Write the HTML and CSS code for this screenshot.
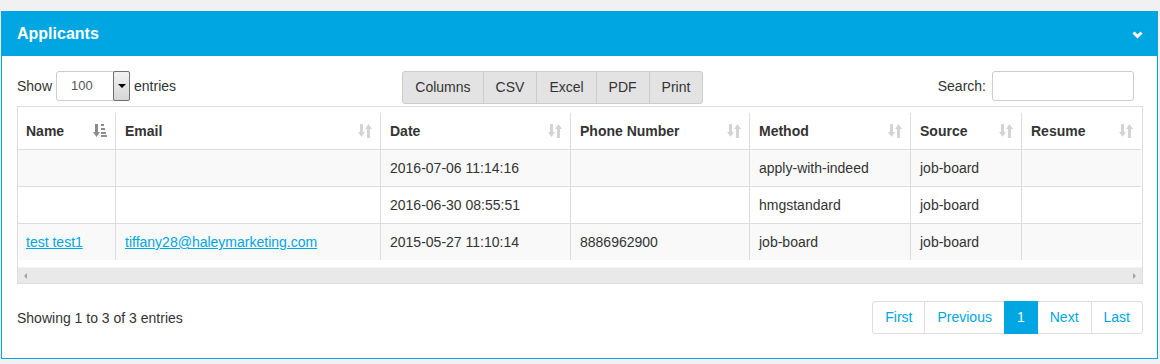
FILE: index.html
```html
<!DOCTYPE html>
<html lang="en">
  <head>
    <meta charset="UTF-8" />
    <title>Applicants</title>
    <link rel="stylesheet" href="styles.css">
  </head>
  <body>
    <div class="panel">
      <div class="panel-heading">
        <span class="panel-title">Applicants</span>
        <svg class="chevron" width="11" height="8" viewBox="0 0 11 8">
          <polyline points="1.5,1.5 5.5,5.5 9.5,1.5" fill="none" stroke="#fff" stroke-width="3" />
        </svg>
      </div>
      <div class="panel-body">
        <div class="controls">
          <div class="length">
            <span>Show</span>
            <div class="select">
              <span class="select-value">100</span>
              <span class="select-arrow"><i></i></span>
            </div>
            <span>entries</span>
          </div>
          <div class="btn-group">
            <a class="btn" href="javascript:;">Columns</a>
            <a class="btn" href="javascript:;">CSV</a>
            <a class="btn" href="javascript:;">Excel</a>
            <a class="btn" href="javascript:;">PDF</a>
            <a class="btn" href="javascript:;">Print</a>
          </div>
          <div class="filter">
            <label>Search:</label>
            <input type="text" />
          </div>
        </div>

        <div class="scroll">
          <table>
            <colgroup>
              <col style="width: 97px" />
              <col style="width: 265px" />
              <col style="width: 190px" />
              <col style="width: 179px" />
              <col style="width: 161px" />
              <col style="width: 111px" />
              <col style="width: 120px" />
            </colgroup>
            <thead>
              <tr>
                <th>Name
                  <svg class="sort active" width="14" height="14" viewBox="0 0 14 14">
                    <rect x="2" y="0" width="3" height="9" />
                    <polygon points="0,8 7,8 3.5,13" />
                    <rect x="8" y="0" width="3" height="2" />
                    <rect x="8" y="4" width="4" height="2" />
                    <rect x="8" y="8" width="5" height="2" />
                    <rect x="8" y="11" width="6" height="2" />
                  </svg>
                </th>
                <th>Email<svg class="sort" width="14" height="14" viewBox="0 0 14 14"><rect x="2" y="0" width="3" height="9" /><polygon points="0,8 7,8 3.5,13" /><rect x="9" y="4" width="3" height="10" /><polygon points="7,5 14,5 10.5,0" /></svg></th>
                <th>Date<svg class="sort" width="14" height="14" viewBox="0 0 14 14"><rect x="2" y="0" width="3" height="9" /><polygon points="0,8 7,8 3.5,13" /><rect x="9" y="4" width="3" height="10" /><polygon points="7,5 14,5 10.5,0" /></svg></th>
                <th>Phone Number<svg class="sort" width="14" height="14" viewBox="0 0 14 14"><rect x="2" y="0" width="3" height="9" /><polygon points="0,8 7,8 3.5,13" /><rect x="9" y="4" width="3" height="10" /><polygon points="7,5 14,5 10.5,0" /></svg></th>
                <th>Method<svg class="sort" width="14" height="14" viewBox="0 0 14 14"><rect x="2" y="0" width="3" height="9" /><polygon points="0,8 7,8 3.5,13" /><rect x="9" y="4" width="3" height="10" /><polygon points="7,5 14,5 10.5,0" /></svg></th>
                <th>Source<svg class="sort" width="14" height="14" viewBox="0 0 14 14"><rect x="2" y="0" width="3" height="9" /><polygon points="0,8 7,8 3.5,13" /><rect x="9" y="4" width="3" height="10" /><polygon points="7,5 14,5 10.5,0" /></svg></th>
                <th>Resume<svg class="sort" width="14" height="14" viewBox="0 0 14 14"><rect x="2" y="0" width="3" height="9" /><polygon points="0,8 7,8 3.5,13" /><rect x="9" y="4" width="3" height="10" /><polygon points="7,5 14,5 10.5,0" /></svg></th>
              </tr>
            </thead>
            <tbody>
              <tr class="odd">
                <td></td>
                <td></td>
                <td>2016-07-06 11:14:16</td>
                <td></td>
                <td>apply-with-indeed</td>
                <td>job-board</td>
                <td></td>
              </tr>
              <tr>
                <td></td>
                <td></td>
                <td>2016-06-30 08:55:51</td>
                <td></td>
                <td>hmgstandard</td>
                <td>job-board</td>
                <td></td>
              </tr>
              <tr class="odd">
                <td><a href="javascript:;">test test1</a></td>
                <td><a href="javascript:;">tiffany28@haleymarketing.com</a></td>
                <td>2015-05-27 11:10:14</td>
                <td>8886962900</td>
                <td>job-board</td>
                <td>job-board</td>
                <td></td>
              </tr>
            </tbody>
          </table>
          <div class="scrollbar">
            <i class="arrow-left"></i>
            <i class="arrow-right"></i>
          </div>
        </div>

        <div class="footer">
          <div class="info">Showing 1 to 3 of 3 entries</div>
          <ul class="pagination">
            <li><a href="javascript:;">First</a></li>
            <li><a href="javascript:;">Previous</a></li>
            <li class="active"><a href="javascript:;">1</a></li>
            <li><a href="javascript:;">Next</a></li>
            <li><a href="javascript:;">Last</a></li>
          </ul>
        </div>
      </div>
    </div>
  </body>
</html>
```

FILE: styles.css
```css
* {
  box-sizing: border-box;
}
body {
  margin: 0;
  padding: 11px 2px 0 1px;
  background: #f1f1f1;
  font-family: "Liberation Sans", Arial, sans-serif;
  font-size: 14px;
  color: #333;
}
.panel {
  border: 1px solid #00a6e1;
  background: #fff;
}
.panel-heading {
  display: flex;
  align-items: center;
  justify-content: space-between;
  height: 44px;
  padding: 0 14px 0 15px;
  background: #00a6e1;
  color: #fff;
}
.panel-title {
  font-size: 16px;
  font-weight: bold;
}
.chevron {
  display: block;
  margin-top: 1px;
}
.panel-body {
  padding: 15px 14px 24px 15px;
}
.controls {
  display: grid;
  grid-template-columns: 1fr 1fr 1fr;
  column-gap: 30px;
  align-items: start;
}
.length {
  display: flex;
  align-items: center;
  gap: 4px;
  height: 30px;
}
.select {
  display: flex;
  width: 74px;
  height: 30px;
  border: 1px solid #ccc;
  border-radius: 3px;
  background: #fff;
}
.select-value {
  flex: 1;
  padding-left: 14px;
  line-height: 28px;
  font-size: 13px;
  color: #555;
}
.select-arrow {
  display: flex;
  align-items: center;
  justify-content: center;
  width: 17px;
  height: 30px;
  margin: -1px -1px 0 0;
  border: 1px solid #707070;
  border-radius: 2px;
  background: linear-gradient(#f2f2f2, #d6d6d6);
}
.select-arrow i {
  width: 0;
  height: 0;
  border-left: 4px solid transparent;
  border-right: 4px solid transparent;
  border-top: 4px solid #000;
}
.btn-group {
  display: flex;
}
.btn {
  display: block;
  padding: 6px 12px;
  line-height: 19px;
  border: 1px solid #ccc;
  background: #e3e3e3;
  color: #333;
  text-decoration: none;
}
.btn + .btn {
  margin-left: -1px;
}
.btn:first-child {
  border-radius: 3px 0 0 3px;
}
.btn:last-child {
  border-radius: 0 3px 3px 0;
}
.filter {
  display: flex;
  align-items: center;
  justify-content: flex-end;
  gap: 6px;
  padding-right: 9px;
}
.filter input {
  width: 142px;
  height: 30px;
  border: 1px solid #ccc;
  border-radius: 3px;
  font: inherit;
}
.scroll {
  margin-top: 2px;
  padding-top: 6px;
  border: 1px solid #ddd;
  overflow: hidden;
}
table {
  table-layout: fixed;
  width: 1123px;
  border-collapse: separate;
  border-spacing: 0;
}
th,
td {
  padding: 8px 8px 8px 9px;
  line-height: 20px;
  text-align: left;
  white-space: nowrap;
  overflow: hidden;
}
th:first-child,
td:first-child {
  padding-left: 8px;
}
th + th,
td + td {
  border-left: 1px solid #ddd;
}
th {
  position: relative;
  border-bottom: 1px solid #ddd;
  font-weight: bold;
}
tbody tr + tr td {
  border-top: 1px solid #ddd;
}
tr.odd td {
  background: #f9f9f9;
}
td a {
  color: #00a6e1;
}
.sort {
  position: absolute;
  right: 8px;
  top: 11px;
  fill: #d4d4d4;
}
.sort.active {
  fill: #8c8c8c;
}
.scrollbar {
  display: flex;
  align-items: center;
  justify-content: space-between;
  height: 16px;
  margin-top: 7px;
  padding: 0 6px;
  background: #e9e9e9;
  border-top: 1px solid #f4f4f4;
}
.arrow-left {
  border-top: 3px solid transparent;
  border-bottom: 3px solid transparent;
  border-right: 3px solid #a3a3a3;
}
.arrow-right {
  border-top: 3px solid transparent;
  border-bottom: 3px solid transparent;
  border-left: 3px solid #a3a3a3;
}
.footer {
  display: flex;
  align-items: center;
  justify-content: space-between;
  margin-top: 17px;
}
.pagination {
  display: flex;
  margin: 0;
  padding: 0;
  list-style: none;
}
.pagination a {
  display: block;
  padding: 6px 12px;
  line-height: 19px;
  border: 1px solid #ddd;
  color: #00a6e1;
  text-decoration: none;
}
.pagination li + li a {
  margin-left: -1px;
}
.pagination li:first-child a {
  border-radius: 3px 0 0 3px;
}
.pagination li:last-child a {
  border-radius: 0 3px 3px 0;
}
.pagination .active a {
  position: relative;
  background: #00a6e1;
  border-color: #00a6e1;
  color: #fff;
}
```
